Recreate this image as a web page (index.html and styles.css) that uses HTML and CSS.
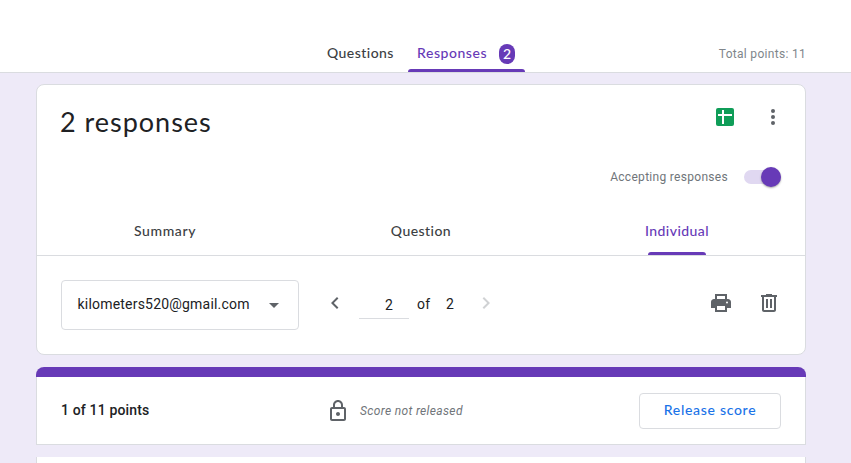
FILE: index.html
```html
<!DOCTYPE html>
<html lang="en">
<head>
<meta charset="utf-8">
<title>Form responses</title>
<link rel="stylesheet" href="styles.css">
</head>
<body>
<header class="topbar">
  <nav class="modes">
    <a class="mode mode-questions"><span>Questions</span></a>
    <a class="mode mode-active"><span class="mode-label">Responses</span><b class="badge">2</b></a>
  </nav>
  <span class="total">Total points: 11</span>
</header>
<main>
  <section class="card responses">
    <div class="title-row">
      <h1>2 responses</h1>
      <svg class="sheets" width="18" height="18" viewBox="0 0 18 18"><rect width="18" height="18" rx="2" fill="#0f9d58"/><path d="M2 6h14v2H2zM6 2h2v14H6z" fill="#fff"/></svg>
      <svg class="icon" viewBox="0 0 24 24"><circle cx="12" cy="6" r="2"/><circle cx="12" cy="12" r="2"/><circle cx="12" cy="18" r="2"/></svg>
    </div>
    <div class="accept-row">
      <span class="accept-label">Accepting responses</span>
      <span class="toggle"><i class="knob"></i></span>
    </div>
    <nav class="tabs">
      <a class="tab"><span class="t-summary">Summary</span></a>
      <a class="tab"><span class="t-question">Question</span></a>
      <a class="tab tab-active"><span class="t-individual">Individual</span></a>
    </nav>
    <div class="pager">
      <div class="select"><span class="email">kilometers520@gmail.com</span><svg class="icon" viewBox="0 0 24 24"><path d="M7 10l5 5 5-5z"/></svg></div>
      <svg class="icon prev" viewBox="0 0 24 24"><path d="M15.41 7.41L14 6l-6 6 6 6 1.41-1.41L10.83 12z"/></svg>
      <span class="page-input">2</span>
      <span class="of">of</span>
      <span class="count">2</span>
      <svg class="icon next" viewBox="0 0 24 24"><path d="M10 6L8.59 7.41 13.17 12l-4.58 4.59L10 18l6-6z"/></svg>
      <svg class="icon print" viewBox="0 0 24 24"><path d="M19 8h-1V3H6v5H5c-1.660 0-3 1.340-3 3v6h4v4h12v-4h4v-6c0-1.660-1.340-3-3-3zM8 5h8v3H8V5zm8 14H8v-4h8v4zm2-6.500a1 1 0 1 1 0-2 1 1 0 0 1 0 2z"/></svg>
      <svg class="icon" viewBox="0 0 24 24"><path fill-rule="evenodd" d="M15 4V3H9v1H4v2h1v13c0 1.100.9 2 2 2h10c1.100 0 2-.9 2-2V6h1V4h-5zm2 15H7V6h10v13zM9 8h2v9H9zM13 8h2v9h-2z"/></svg>
    </div>
  </section>
  <section class="score">
    <span class="points">1 of 11 points</span>
    <svg class="icon lock" viewBox="0 0 24 24"><path fill-rule="evenodd" d="M18 8h-1V6c0-2.760-2.240-5-5-5S7 3.240 7 6v2H6c-1.100 0-2 .9-2 2v10c0 1.100.9 2 2 2h12c1.100 0 2-.9 2-2V10c0-1.100-.9-2-2-2zM9 6c0-1.660 1.340-3 3-3s3 1.340 3 3v2H9V6zm9 14H6V10h12v10zm-6-3c1.100 0 2-.9 2-2s-.9-2-2-2-2 .9-2 2 .9 2 2 2z"/></svg>
    <em class="status">Score not released</em>
    <button class="release"><span>Release score</span></button>
  </section>
  <section class="next-card"></section>
</main>
</body>
</html>
```
FILE: styles.css
```css
* { box-sizing: border-box; }
body {
  margin: 0;
  height: 463px;
  overflow: hidden;
  background: #eeeaf8;
  color: #202124;
  font: 14px/20px Roboto, sans-serif;
}
.icon { width: 24px; height: 24px; fill: #5f6368; flex: none; }
.topbar {
  display: flex;
  align-items: flex-end;
  justify-content: space-between;
  height: 73px;
  padding: 0 45px 0 312px;
  background: #fff;
  border-bottom: 1px solid #dadce0;
}
.modes { display: flex; }
.mode {
  display: flex;
  height: 28px;
  color: #3c4043;
  font: 500 14px/18px Lato, sans-serif;
}
.mode-questions { width: 96px; padding-left: 15px; letter-spacing: .45px; }
.mode-active {
  width: 117px;
  padding-left: 9px;
  color: #673ab7;
  position: relative;
}
.mode-label { width: 82px; letter-spacing: .55px; }
.mode-active::after, .tab-active::after {
  content: "";
  position: absolute;
  bottom: 0;
  height: 3px;
  border-radius: 3px 3px 0 0;
  background: #673ab7;
}
.mode-active::after { left: 0; right: 0; }
.badge {
  width: 16px;
  height: 20px;
  border-radius: 8px;
  background: #673ab7;
  color: #fff;
  text-align: center;
  font: 500 14px/20px Lato, sans-serif;
}
.total {
  margin-bottom: 8px;
  color: #80868b;
  font-size: 12px;
  letter-spacing: .3px;
}
main { padding: 11px 45px 0 36px; }
.card {
  height: 271px;
  background: #fff;
  border: 1px solid #dadce0;
  border-radius: 8px;
}
.title-row { display: flex; align-items: center; height: 64px; padding: 0 20px 0 24px; }
h1 {
  flex: 1;
  margin: 10px 0 0 -1px;
  font: 400 27px/32px Lato, sans-serif;
  letter-spacing: .98px;
}
.sheets { margin-right: 27px; }
.accept-row {
  display: flex;
  align-items: center;
  justify-content: flex-end;
  height: 56px;
  padding-right: 24px;
}
.accept-label { margin-right: 16px; color: #70757a; font-size: 12px; letter-spacing: .3px; }
.toggle {
  display: flex;
  align-items: center;
  justify-content: flex-end;
  width: 37px;
  height: 14px;
  border-radius: 7px;
  background: #e0d8f1;
}
.knob {
  width: 20px;
  height: 20px;
  border-radius: 50%;
  background: #673ab7;
  box-shadow: 0 1px 2px rgba(0, 0, 0, .35);
}
.tabs { display: flex; height: 51px; border-bottom: 1px solid #dadce0; }
.tab {
  display: flex;
  flex: 1;
  justify-content: center;
  padding-top: 16px;
  position: relative;
  color: #3c4043;
  font: 500 14px/20px Lato, sans-serif;
  letter-spacing: .45px;
}
.t-summary { letter-spacing: .6px; }
.tab-active { color: #673ab7; }
.tab-active::after { width: 58px; }
.pager { display: flex; align-items: center; height: 94px; padding: 0 24px; }
.select {
  display: flex;
  align-items: center;
  width: 238px;
  height: 50px;
  margin-top: 4px;
  padding-left: 16px;
  border: 1px solid #dadce0;
  border-radius: 4px;
}
.email { width: 184px; margin: -2px 0 0 -.5px; letter-spacing: .2px; }
.prev { margin-left: 24px; }
.page-input {
  width: 50px;
  height: 27px;
  margin: 4px 8px 0 12px;
  padding: 3px 0 0 26px;
  border-bottom: 1px solid #dadce0;
}
.of { width: 29px; margin-top: 2px; letter-spacing: .2px; }
.count { width: 28px; margin-top: 2px; }
.next { fill: #d0d2d4; }
.print { margin: 0 24px 0 auto; }
.score {
  display: flex;
  align-items: center;
  height: 78px;
  margin-top: 12px;
  padding: 0 24px;
  background: #fff;
  border: 1px solid #dadce0;
  border-top: 0;
  border-radius: 8px 8px 0 0;
  position: relative;
}
.score::before {
  content: "";
  position: absolute;
  top: 0;
  left: -1px;
  right: -1px;
  height: 10px;
  border-radius: 8px 8px 0 0;
  background: #673ab7;
}
.score > * { margin-top: 10px; }
.score > .points { width: 265px; margin-top: 8px; font-weight: 500; letter-spacing: .15px; }
.status { margin-left: 10px; color: #70757a; font-size: 12px; letter-spacing: .35px; }
.release {
  width: 142px;
  height: 36px;
  margin-left: auto;
  padding: 0 0 2px;
  border: 1px solid #dadce0;
  border-radius: 4px;
  background: #fff;
  color: #1a73e8;
  font: 500 14px/20px Lato, sans-serif;
  letter-spacing: .7px;
}
.next-card {
  height: 20px;
  margin-top: 12px;
  background: #fff;
  border: solid #dadce0;
  border-width: 0 1px;
}
```
